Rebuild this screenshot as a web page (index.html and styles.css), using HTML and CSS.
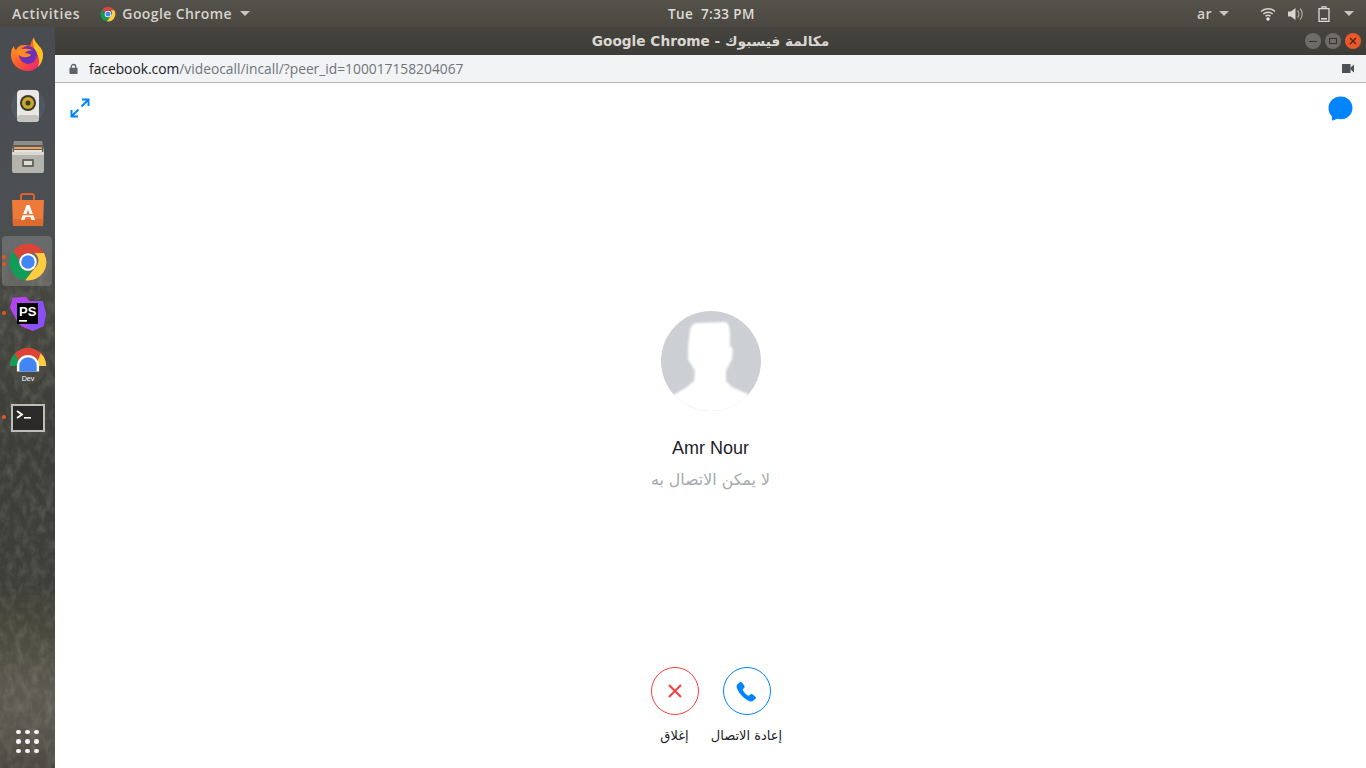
FILE: index.html
```html
<!DOCTYPE html>
<html lang="en">
<head>
    <meta charset="UTF-8">
    <title>Google Chrome - مكالمة فيسبوك</title>
    <link rel="stylesheet" href="styles.css">
</head>
<body>
    <header class="topbar">
        <div class="topbar-left">
            <span class="activities">Activities</span>
            <span class="app-menu">
                <svg class="app-menu-icon" width="16" height="16" viewBox="0 0 48 48">
                    <path fill="#db4437" d="M24 2a22 22 0 0 1 19 11H24a11 11 0 0 0-10.500 7.500L6.500 10.500A22 22 0 0 1 24 2z"/>
                    <path fill="#0f9d58" d="M6.500 10.500l9.500 19A11 11 0 0 0 28 34.500L21 46A22 22 0 0 1 6.500 10.500z"/>
                    <path fill="#ffcd40" d="M43 13a22 22 0 0 1-22 33l11-16a11 11 0 0 0 0-17z"/>
                    <circle cx="24" cy="24" r="10" fill="#fff"/>
                    <circle cx="24" cy="24" r="7.500" fill="#4285f4"/>
                </svg>
                Google Chrome
                <i class="caret"></i>
            </span>
        </div>
        <span class="clock">Tue&nbsp;&nbsp;7:33 PM</span>
        <div class="topbar-right">
            <span class="lang">ar</span>
            <i class="caret caret-lang"></i>
            <svg class="tray-wifi" width="16" height="14" viewBox="0 0 16 14">
                <path fill="none" stroke="#d8d6d0" stroke-width="1.500" d="M1 4.500a10 10 0 0 1 14 0M3.300 7a7 7 0 0 1 9.400 0M5.500 9.300a3.800 3.800 0 0 1 5 0"/>
                <circle cx="8" cy="12" r="1.700" fill="#ecebe6"/>
            </svg>
            <svg class="tray-sound" width="16" height="14" viewBox="0 0 16 14">
                <path fill="#d8d6d0" d="M0 4.500h3L7.500 1v12L3 9.500H0z"/>
                <path fill="none" stroke="#a9a7a1" stroke-width="1.200" d="M9.500 3.500a5 5 0 0 1 0 7M12 1.500a8 8 0 0 1 0 11"/>
            </svg>
            <svg class="tray-battery" width="12" height="16" viewBox="0 0 12 16">
                <path fill="none" stroke="#dddbd6" stroke-width="1.300" d="M1 2.700h10v12.600H1zM4 2.500V.8h4v1.700"/>
                <rect x="3" y="12" width="6" height="1.600" fill="#dddbd6"/>
            </svg>
            <i class="caret caret-tray"></i>
        </div>
    </header>

    <div class="desktop">
        <nav class="dock">
            <svg class="dock-texture" width="55" height="741">
                <filter id="rock" x="0" y="0" width="100%" height="100%">
                    <feTurbulence type="fractalNoise" baseFrequency="0.13 0.08" numOctaves="4" seed="7"/>
                    <feColorMatrix values="0 0 0 0 0.85  0 0 0 0 0.85  0 0 0 0 0.75  1.8 0 0 0 -0.72"/>
                </filter>
                <rect width="55" height="741" filter="url(#rock)"/>
            </svg>
            <div class="dock-item">
                <svg width="38" height="38" viewBox="0 0 38 38">
                    <defs>
                        <linearGradient id="fx" x1="0" y1="0" x2="1" y2="1">
                            <stop offset="0" stop-color="#ffb01f"/>
                            <stop offset="0.500" stop-color="#ff5a2a"/>
                            <stop offset="1" stop-color="#e31587"/>
                        </linearGradient>
                    </defs>
                    <path fill="url(#fx)" d="M19 36C9.500 36 2 29 2 20c0-4 1-7 3-9 0 2 1 3 2 4 1-3 4-5 7-5 3 0 5 0 7 1 1-3 2-6 4-9 0 4 2 5 5 9 3 3 4 6 4 9 0 9-7 16-15 16z"/>
                    <path fill="#ffc21f" d="M25 2c0 4 2 5 5 9 3 3 4 6 4 9 0 5-2 9-5 12 2-6 1-11-2-15-2-3-4-8-2-15z"/>
                    <circle cx="19" cy="20" r="9" fill="#6d2fb6"/>
                    <path fill="#ff8a1f" d="M6 17c3-3 8-4 13-3 2 0 4 1 5 2-3-1-7 0-8 2 3 0 5 1 6 2-3 3-9 3-12 0-2-1-3-2-4-3z"/>
                </svg>
            </div>
            <div class="dock-item">
                <svg width="38" height="38" viewBox="0 0 38 38">
                    <circle cx="19" cy="19" r="17" fill="#5a6c80" opacity="0.35"/>
                    <rect x="8" y="3" width="22" height="32" rx="4" fill="#e9e8e4"/>
                    <rect x="8" y="28" width="22" height="7" rx="3" fill="#c4c3be"/>
                    <circle cx="19" cy="16" r="8" fill="#3a3830"/>
                    <circle cx="19" cy="16" r="6" fill="#c7a92a"/>
                    <circle cx="19" cy="16" r="2.500" fill="#3a3830"/>
                </svg>
            </div>
            <div class="dock-item">
                <svg width="38" height="38" viewBox="0 0 38 38">
                    <path fill="#8d8c88" d="M5 2h28l2 9H3z"/>
                    <rect x="3" y="10" width="32" height="24" rx="2" fill="#b4b3ae"/>
                    <rect x="4" y="6" width="30" height="7" fill="#5f5b55"/>
                    <rect x="5" y="8" width="28" height="2" fill="#ef9d5b"/>
                    <rect x="5" y="11" width="28" height="2" fill="#e8e4da"/>
                    <rect x="3" y="13" width="32" height="3" fill="#d8d7d2"/>
                    <rect x="13" y="20" width="12" height="8" rx="1" fill="#69675f"/>
                    <rect x="15" y="22" width="8" height="4" fill="#dedcd6"/>
                </svg>
            </div>
            <div class="dock-item">
                <svg width="38" height="38" viewBox="0 0 38 38">
                    <path fill="none" stroke="#d9612a" stroke-width="2" d="M12 10V5a2 2 0 0 1 2-2h9a2 2 0 0 1 2 2v5"/>
                    <path fill="#ee7a3a" d="M3 9h32l-1 25a1.500 1.500 0 0 1-2 1H5a1.500 1.500 0 0 1-1-1z"/>
                    <path fill="#df6a2e" d="M3.500 28h31l-.5 6a1.500 1.500 0 0 1-2 1H5a1.500 1.500 0 0 1-1-1z"/>
                    <path fill="#fff" d="M17.500 14h3l5.500 15h-3.500l-1-3h-5l-1 3H12zm1.500 4.500l-1.700 5h3.400z"/>
                    <rect x="10" y="23" width="18" height="1.300" fill="#ee7a3a"/>
                </svg>
            </div>
            <div class="dock-item dock-item-active">
                <i class="pip pip-top"></i>
                <i class="pip pip-bottom"></i>
                <svg width="38" height="38" viewBox="0 0 48 48">
                    <path fill="#db4437" d="M24 1a23 23 0 0 1 20 11.500H24a11.500 11.500 0 0 0-11 8L5.500 10A23 23 0 0 1 24 1z"/>
                    <path fill="#0f9d58" d="M5.500 10L15 30a11.500 11.500 0 0 0 13 5.500L20.500 47A23 23 0 0 1 5.500 10z"/>
                    <path fill="#ffcd40" d="M44 12.500A23 23 0 0 1 20.500 47L33 31a11.500 11.500 0 0 0-1-18.500z"/>
                    <circle cx="24" cy="24" r="11" fill="#fff"/>
                    <circle cx="24" cy="24" r="8.500" fill="#4285f4"/>
                </svg>
            </div>
            <div class="dock-item">
                <i class="pip pip-single"></i>
                <svg width="38" height="38" viewBox="0 0 38 38">
                    <path fill="#b345f1" d="M3.700 2.700L17 1.700 20 6h13.700L37 19l-2.300 12-11 5L12 31l-4-5-7-13.300z"/>
                    <path fill="#8a50f4" d="M26 6h7.700L37 19l-2.300 12-11 5L16 29h13z"/>
                    <rect x="8" y="8" width="21" height="21" fill="#000"/>
                    <text class="ps-text" x="10" y="20.500">PS</text>
                    <rect x="10" y="25" width="8" height="1.700" fill="#fff"/>
                </svg>
            </div>
            <div class="dock-item">
                <svg width="38" height="38" viewBox="0 0 48 48">
                    <circle cx="24" cy="24" r="23" fill="#4a4a45"/>
                    <path fill="#db4437" d="M1 24a23 23 0 0 1 46 0H36a12 12 0 0 0-24 0z"/>
                    <path fill="#0f9d58" d="M1 24a23 23 0 0 1 7-16l6 16z"/>
                    <path fill="#ffcd40" d="M47 24a23 23 0 0 0-7-16l-6 16z"/>
                    <path fill="#fff" d="M10 31V24a14 14 0 0 1 28 0v7z"/>
                    <path fill="#4285f4" d="M13 31v-7a11 11 0 0 1 22 0v7z"/>
                    <text class="dev-text" x="24" y="43" text-anchor="middle">Dev</text>
                </svg>
            </div>
            <div class="dock-item">
                <i class="pip pip-single"></i>
                <svg width="38" height="38" viewBox="0 0 38 38">
                    <rect x="2" y="5" width="34" height="28" fill="#bdbcb8"/>
                    <rect x="4" y="7" width="30" height="24" fill="#2b2a29"/>
                    <path fill="none" stroke="#fff" stroke-width="1.800" d="M8 12l5 3.500L8 19"/>
                    <rect x="15" y="18" width="7" height="1.600" fill="#fff"/>
                </svg>
            </div>
            <div class="dock-spacer"></div>
            <div class="app-grid">
                <i></i><i></i><i></i><i></i><i></i><i></i><i></i><i></i><i></i>
            </div>
        </nav>

        <main class="window">
            <div class="titlebar">
                <span class="window-title">Google Chrome - مكالمة فيسبوك</span>
                <div class="window-buttons">
                    <span class="win-btn"><i class="win-min"></i></span>
                    <span class="win-btn"><i class="win-max"></i></span>
                    <span class="win-btn win-close">
                        <svg width="8" height="8" viewBox="0 0 8 8"><path stroke="#4a2415" stroke-width="1.300" d="M1 1l6 6M7 1L1 7"/></svg>
                    </span>
                </div>
            </div>

            <div class="urlbar">
                <svg class="lock" width="9" height="12" viewBox="0 0 10 12">
                    <path fill="none" stroke="#5f6368" stroke-width="1.400" d="M2.500 5V3.500a2.500 2.500 0 0 1 5 0V5"/>
                    <rect x="0.500" y="4.500" width="9" height="7" rx="1" fill="#5f6368"/>
                </svg>
                <span class="url"><span class="url-host">facebook.com</span>/videocall/incall/?peer_id=100017158204067</span>
                <svg class="cam" width="12" height="9" viewBox="0 0 12 9">
                    <rect x="0" y="0" width="8.500" height="9" fill="#4d5156"/>
                    <path fill="#4d5156" d="M8.500 3.500L12 .5v8L8.500 5.500z"/>
                </svg>
            </div>

            <section class="call">
                <div class="call-top">
                    <svg class="expand-icon" width="20" height="20" viewBox="0 0 20 20">
                        <path fill="none" stroke="#0084ff" stroke-width="2" d="M1.500 12v6.500H8M1.500 18.500l7-7M12 1.500h6.500V8M18.500 1.500l-7 7"/>
                    </svg>
                    <svg width="25" height="25" viewBox="0 0 25 25">
                        <path fill="#0084ff" d="M12.700.5C19.300.5 24.500 5.400 24.500 12c0 6.500-5.200 11.300-11.800 11.300-1.200 0-2.300-.2-3.400-.5L5 24.500c-.7.200-1-.2-1-.8l-.1-3.400C1.800 18.300.5 15.400.5 12 .5 5.400 6 .5 12.700.5z"/>
                    </svg>
                </div>

                <div class="profile">
                    <div class="avatar">
                        <svg width="100" height="100" viewBox="0 0 100 100">
                            <path class="avatar-shape" d="M35 12L65 11Q69 13 69 24L69 35 72 38 71 48 65 60 65 70 71 76 89 84 104 104H-4L11 85 26 76 33 70 34 60 27 48 27 37 29 18Q31 13 35 12z"/>
                            <path d="M12 83A49.500 49.500 0 0 0 88 83" fill="none" stroke="#f0f1f3"/>
                        </svg>
                    </div>
                    <div class="profile-name">Amr Nour</div>
                    <div class="profile-status" dir="rtl">لا يمكن الاتصال به</div>
                </div>

                <div class="actions">
                    <div class="action">
                        <span class="action-btn action-close">
                            <svg width="14" height="14" viewBox="0 0 14 14"><path stroke="#fa3e3e" stroke-width="2" d="M1 1l12 12M13 1L1 13"/></svg>
                        </span>
                        <span class="action-label" dir="rtl">إغلاق</span>
                    </div>
                    <div class="action">
                        <span class="action-btn action-redial">
                            <svg width="21" height="21" viewBox="0 0 21 21">
                                <path fill="#0084ff" d="M1.200 3.500C.5 4.500.4 5.500.8 6.700c1.800 5.500 7.500 11.500 12.800 13.500 1.300.5 2.500.3 3.500-.5l2.300-1.900c.7-.6.700-1.400.1-2l-3-2.500c-.6-.5-1.300-.5-1.900 0l-1.500 1.200c-.4.300-.8.300-1.200.1-2.200-1.300-3.800-3.200-5-5.500-.2-.4-.1-.8.200-1.100l1.200-1.300c.5-.6.500-1.300.1-1.900L6 1.500C5.400.8 4.500.7 3.800 1.300z"/>
                            </svg>
                        </span>
                        <span class="action-label" dir="rtl">إعادة الاتصال</span>
                    </div>
                </div>
            </section>
        </main>
    </div>
</body>
</html>
```

FILE: styles.css
```css
* {
    box-sizing: border-box;
}
html, body {
    height: 100%;
}
body {
    margin: 0;
    width: 1366px;
    height: 768px;
    overflow: hidden;
    display: flex;
    flex-direction: column;
    font-family: "Open Sans", "DejaVu Sans", sans-serif;
    background: #4a4a44;
}

/* gnome top bar */
.topbar {
    height: 27px;
    flex: none;
    display: grid;
    grid-template-columns: 656px auto 1fr;
    align-items: center;
    padding: 0 12px;
    background: linear-gradient(#55524c, #4a4841);
    color: #d6d4cd;
    font-size: 14px;
    font-weight: 600;
    letter-spacing: 0.4px;
}
.topbar-left {
    display: flex;
    align-items: center;
    gap: 20px;
}
.activities {
    letter-spacing: 0.7px;
}
.app-menu {
    display: flex;
    align-items: center;
    gap: 6px;
}
.caret {
    width: 0;
    height: 0;
    margin-left: 2px;
    border-left: 5px solid transparent;
    border-right: 5px solid transparent;
    border-top: 5px solid #c9c7c0;
}
.clock {
    color: #dedcd6;
    font-size: 13.500px;
}
.topbar-right {
    display: flex;
    align-items: center;
    justify-content: flex-end;
}
.lang {
    margin-right: 5px;
}
.caret-lang {
    margin-right: 31px;
}
.tray-sound {
    margin-left: 12px;
}
.tray-battery {
    margin-left: 14px;
}
.caret-tray {
    margin-left: 14px;
}

.desktop {
    flex: 1;
    min-height: 0;
    display: flex;
}

/* launcher */
.dock {
    position: relative;
    width: 55px;
    flex: none;
    display: flex;
    flex-direction: column;
    align-items: flex-start;
    padding: 1px 0 0 2px;
    background: linear-gradient(#484c51 0, #4c4f52 200px, #45463f 265px, #3e3e39 400px, #3f3f3a 560px, #48483c 600px, #5c5a50 660px, #5a584e 700px, #4a4840 741px);
}
.dock-texture {
    position: absolute;
    top: 0;
    left: 0;
    opacity: 0.16;
    -webkit-mask-image: linear-gradient(transparent 205px, #000 270px);
    mask-image: linear-gradient(transparent 205px, #000 270px);
}
.dock-item {
    position: relative;
    width: 50px;
    height: 50px;
    margin-bottom: 2px;
    padding: 2px 0 0 2px;
    display: flex;
    align-items: center;
    justify-content: center;
    border-radius: 4px;
}
.dock-item-active {
    background: rgba(255, 255, 255, 0.17);
}
.pip {
    position: absolute;
    left: 0;
    width: 4px;
    height: 4px;
    border-radius: 50%;
    background: #e95420;
}
.pip-top {
    top: 19px;
}
.pip-bottom {
    top: 26px;
}
.pip-single {
    top: 23px;
}
.ps-text {
    fill: #fff;
    font-family: "Liberation Sans", sans-serif;
    font-size: 13px;
    font-weight: 700;
}
.dev-text {
    fill: #fff;
    font-family: "Liberation Sans", sans-serif;
    font-size: 9px;
}
.dock-spacer {
    flex: 1;
}
.app-grid {
    position: relative;
    display: grid;
    grid-template-columns: repeat(3, 4px);
    gap: 5px;
    margin: 0 0 15px 14px;
}
.app-grid i {
    width: 4.500px;
    height: 4.500px;
    border-radius: 50%;
    background: #f4f4f2;
}

/* chrome window */
.window {
    flex: 1;
    min-width: 0;
    display: flex;
    flex-direction: column;
    background: #fff;
}
.titlebar {
    position: relative;
    height: 28px;
    flex: none;
    display: flex;
    align-items: center;
    justify-content: center;
    background: linear-gradient(#46443e, #3e3c37);
    color: #d9d7d1;
    font-family: "DejaVu Sans", sans-serif;
    font-size: 13.700px;
    font-weight: 700;
}
.window-title {
    unicode-bidi: plaintext;
}
.window-buttons {
    position: absolute;
    right: 5px;
    top: 6px;
    display: flex;
    gap: 4px;
}
.win-btn {
    width: 16px;
    height: 16px;
    display: flex;
    align-items: center;
    justify-content: center;
    border-radius: 50%;
    background: #6e6c66;
}
.win-min {
    width: 8px;
    height: 1px;
    background: #35332f;
}
.win-max {
    width: 8px;
    height: 6px;
    border: 1px solid #35332f;
}
.win-close {
    background: #e9572a;
}
.urlbar {
    height: 28px;
    flex: none;
    display: flex;
    align-items: center;
    padding: 0 12px 0 14px;
    background: #f1f3f4;
    border-bottom: 1px solid #b5b5b5;
}
.lock {
    margin-right: 11px;
}
.url {
    flex: 1;
    color: #70757a;
    font-size: 13.800px;
}
.url-host {
    color: #202124;
}

/* call screen */
.call {
    flex: 1;
    min-height: 0;
    display: flex;
    flex-direction: column;
    align-items: center;
    background: #fff;
}
.call-top {
    align-self: stretch;
    height: 228px;
    flex: none;
    display: flex;
    justify-content: space-between;
    align-items: flex-start;
    padding: 13px 13px 0 15px;
}
.expand-icon {
    margin-top: 2px;
}
.profile {
    display: flex;
    flex-direction: column;
    align-items: center;
}
.avatar {
    width: 100px;
    height: 100px;
    margin-left: 1px;
    border-radius: 50%;
    overflow: hidden;
    background: #ccd0d5;
}
.avatar svg {
    display: block;
}
.avatar-shape {
    fill: #fff;
    filter: blur(1px);
}
.profile-name {
    margin-top: 26px;
    height: 22px;
    line-height: 22px;
    color: #1d2129;
    font-family: "Liberation Sans", sans-serif;
    font-size: 18px;
}
.profile-status {
    margin-top: 10px;
    height: 22px;
    line-height: 22px;
    color: #a6a9ad;
    font-family: "DejaVu Sans", sans-serif;
    font-size: 15.800px;
}
.actions {
    margin-top: 176px;
    display: flex;
    gap: 24px;
}
.action {
    width: 48px;
    display: flex;
    flex-direction: column;
    align-items: center;
}
.action-btn {
    width: 48px;
    height: 48px;
    flex: none;
    display: flex;
    align-items: center;
    justify-content: center;
    border-radius: 50%;
    border: 1px solid #fa3e3e;
}
.action-redial {
    border-color: #0084ff;
}
.action-label {
    margin-top: 11px;
    color: #1d2129;
    font-family: "DejaVu Sans", sans-serif;
    font-size: 13px;
    line-height: 20px;
    white-space: nowrap;
}
```
